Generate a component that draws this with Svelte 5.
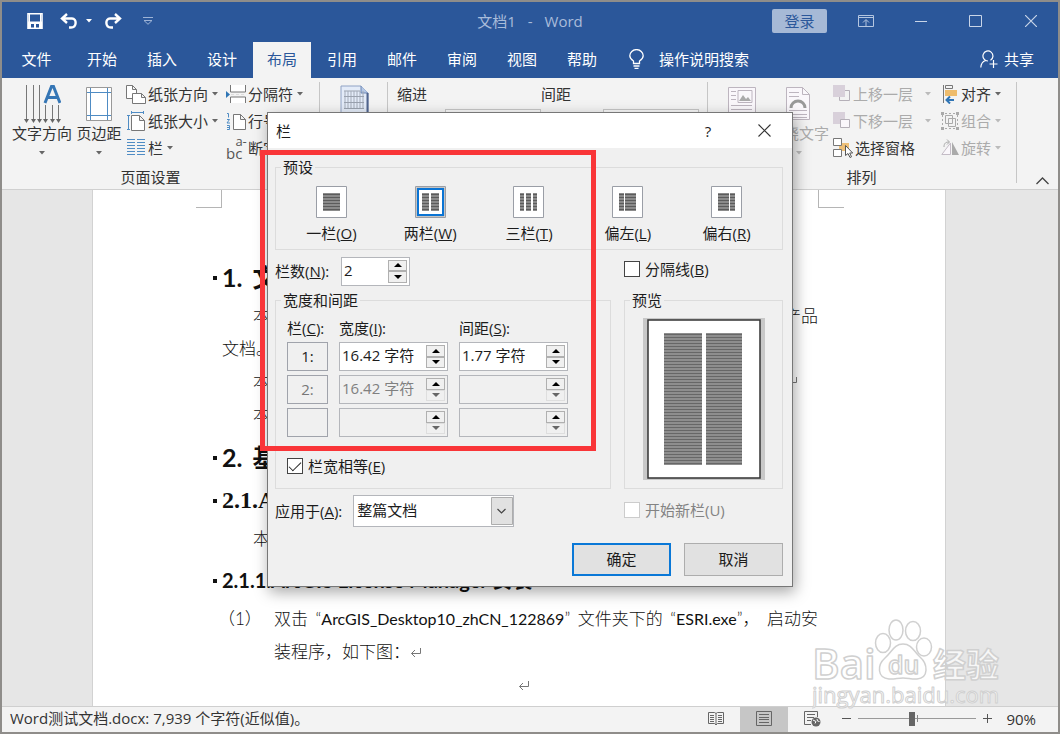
<script>
  const tabs = ['文件', '开始', '插入', '设计', '布局', '引用', '邮件', '审阅', '视图', '帮助'];
  let activeTab = $state('布局');

  const presets = [
    { name: '一栏', key: 'O', cols: [[7, 17]] },
    { name: '两栏', key: 'W', cols: [[7, 7], [16, 8]] },
    { name: '三栏', key: 'T', cols: [[7, 4], [13, 5], [20, 4]] },
    { name: '偏左', key: 'L', cols: [[7, 5], [13, 11]] },
    { name: '偏右', key: 'R', cols: [[7, 11], [19, 5]] }
  ];
  let preset = $state('两栏');
  let count = $state('2');
  let separator = $state(false);
  let equal = $state(true);
  let zoom = $state(45);

  const rows = [
    { n: '1:', width: '16.42 字符', gap: '1.77 字符', on: true },
    { n: '2:', width: '16.42 字符', gap: '', on: false },
    { n: '', width: '', gap: '', on: false }
  ];
  const range = (n) => Array.from({ length: n }, (_, i) => i);
</script>

{#snippet caret(cls)}
  <svg class="caret {cls}" width="6" height="4" viewBox="0 0 6 4"><path d="M0 0h6L3 3.6z" fill="currentColor" /></svg>
{/snippet}

{#snippet spinner(id, value, label, on)}
  <span class="spin" class:off={!on}>
    <input {id} type="text" {value} aria-label={label} disabled={!on} />
    <span class="arrows">
      <button type="button" aria-label="增加"><svg width="8" height="4" viewBox="0 0 8 4"><path d="M0 4h8L4 0z" fill="#000" /></svg></button>
      <button type="button" aria-label="减少" disabled={!on}><svg width="8" height="4" viewBox="0 0 8 4"><path d="M0 0h8L4 4z" fill="currentColor" /></svg></button>
    </span>
  </span>
{/snippet}

{#snippet pilcrow()}
  <svg class="return" width="12" height="10" viewBox="0 0 12 10" fill="none" stroke="#777"><path d="M10.5 0v5.5H1.5M5 2L1.5 5.5 5 9" /></svg>
{/snippet}

<div class="window">
  <header class="titlebar">
    <div class="quick">
      <button aria-label="保存"><svg width="16" height="16" viewBox="0 0 16 16"><path d="M1 .8h14v14.400H1z" fill="none" stroke="#fff" stroke-width="1.600" /><path d="M1 8.500h14V15h-3v-4H4v4H1z" fill="#fff" /><path d="M7 11h2v4H7zM2 1h1v8H2zM13 1h1v8h-1z" fill="#fff" /></svg></button>
      <button class="undo" aria-label="撤消"><svg width="18" height="16" viewBox="0 0 18 16" fill="none" stroke="#fff" stroke-width="2.400"><path d="M7 1L2 5.500 7 10M2.500 5.500H12c5 0 5 9-1 9H9" /></svg></button>
      {@render caret('white')}
      <button class="redo" aria-label="恢复"><svg width="18" height="16" viewBox="0 0 18 16" fill="none" stroke="#fff" stroke-width="2.400"><path d="M11 1l5 4.500-5 4.500M15.500 5.500H6c-5 0-5 9 1 9h2" /></svg></button>
      <button class="more" aria-label="自定义"><svg width="10" height="8" viewBox="0 0 10 8" fill="none" stroke="#9db3d6"><path d="M0 .5h10M1 3.500h8L5 7.300z" /></svg></button>
    </div>
    <div class="title"><span>文档1</span><span>-</span><span>Word</span></div>
    <div class="controls">
      <button class="login">登录</button>
      <button aria-label="功能区显示选项"><svg width="16" height="12" viewBox="0 0 16 12" fill="none" stroke="#b5c6e0"><path d="M.5.5h15v11H.5zM.5 2.500h15M8 11V5M5 7.500L8 4.500l3 3" /></svg></button>
      <button aria-label="最小化"><svg width="14" height="12" viewBox="0 0 14 12"><path d="M1 6.500h12" stroke="#c9d5e8" /></svg></button>
      <button aria-label="最大化"><svg width="13" height="12" viewBox="0 0 13 12"><path d="M.5.5h12v11H.5z" fill="none" stroke="#c9d5e8" /></svg></button>
      <button aria-label="关闭"><svg width="12" height="12" viewBox="0 0 12 12"><path d="M0 0l12 12M12 0L0 12" stroke="#c9d5e8" stroke-width="1.200" /></svg></button>
    </div>
  </header>

  <nav class="tabs">
    {#each tabs as tab}
      <button class:active={activeTab === tab} class:file={tab === '文件'} onclick={() => (activeTab = tab)}>{tab}</button>
    {/each}
    <button class="tell">
      <svg width="15" height="20" viewBox="0 0 15 20" fill="none" stroke="#fff" stroke-width="1.300"><path d="M4.500 14.500V12C2 10.500.8 9 .8 6.800a6.700 6.200 0 0 1 13.400 0c0 2.200-1.200 3.700-3.700 5.200v2.500zM4.500 17h6M5.500 19.300h4" /></svg>
      操作说明搜索
    </button>
    <button class="share">
      <svg width="18" height="18" viewBox="0 0 18 18" fill="none" stroke="#fff" stroke-width="1.200"><path d="M8 11a5 5 0 1 1 2.500-.7M5.500 10.500C2.500 11.500 1 14 .8 17.500M13.500 10v8M9.500 14h8" /></svg>
      共享
    </button>
  </nav>

  <section class="ribbon">
    <div class="group page">
      <div class="tools">
        <button class="big">
          <svg width="38" height="38" viewBox="0 0 38 38"><path d="M3.500 0v34M10.500 0v34M16.500 0v34M22.500 20v14M29.500 20v14M35.500 20v14" stroke="#777" /><path d="M1 34h5l-2.500 4zM8 34h5l-2.500 4zM14 34h5l-2.500 4zM20 34h5l-2.500 4zM27 34h5l-2.500 4zM33 34h5l-2.500 4z" fill="#666" /><path d="M22 18L28.500 1.500h2L37 18M24.500 12.500h10" fill="none" stroke="#3576b5" stroke-width="3" /></svg>
          <span>文字方向</span>{@render caret('')}
        </button>
        <button class="big narrow">
          <svg width="28" height="38" viewBox="0 0 28 38"><path d="M1.500 2.500h25v33h-25z" fill="#fff" stroke="#999" /><path d="M5.500 3v32M22.500 3v32M2 7.500h24M2 30.500h24" stroke="#4f8cc4" /></svg>
          <span>页边距</span>{@render caret('')}
        </button>
        <div class="stack">
          <button><svg class="ico" width="20" height="20" viewBox="0 0 20 20" fill="#fff" stroke="#777"><path d="M.5 1.500h6l4 4v9H.5zM6.500 1.500v4h4" /><path d="M6.500 9.500h9l4 4v6h-13zM15.500 9.500v4h4" /></svg>纸张方向{@render caret('')}</button>
          <button><svg class="ico" width="20" height="20" viewBox="0 0 20 20" fill="none"><path d="M5.500 4.500h8l5 5v10h-13zM13.500 4.500v5h5" fill="#fff" stroke="#777" /><path d="M5 1.500h13M5.500 0v3M17.500 0v3M2.500 4v15M1 4.500h3M1 18.500h3" stroke="#4f8cc4" /></svg>纸张大小{@render caret('')}</button>
          <button><svg class="ico" width="20" height="20" viewBox="0 0 20 20"><path d="M1 1.500h8M1 4.500h8M1 7.500h8M1 10.500h8M1 13.500h8M1 16.500h8M11 1.500h8M11 4.500h8M11 7.500h8M11 10.500h8M11 13.500h8M11 16.500h8" stroke="#4f8cc4" /></svg>栏{@render caret('')}</button>
        </div>
        <div class="stack">
          <button><svg class="ico" width="20" height="20" viewBox="0 0 20 20"><path d="M4.500 1v7h15V1M4.500 19v-6h15v6" fill="#fff" stroke="#777" /><path d="M0 7l4 3.500L0 14z" fill="#2f75b5" /><path d="M5 10.500h3M10 10.500h3M15 10.500h3" stroke="#ddd" /></svg>分隔符{@render caret('')}</button>
          <button><svg class="ico" width="20" height="20" viewBox="0 0 20 20"><path d="M7.500 3.500h7l5 5v10h-12zM14.500 3.500v5h5" fill="#fff" stroke="#777" /><path d="M1 2.500h1.500v4M1 8.500h2.500L1 12h3M1 14.500h2.500v4H1M1 16.500h2" fill="none" stroke="#4f8cc4" /></svg>行号{@render caret('')}</button>
          <button><span class="ico hyphen"><span>bc</span><sup>a-</sup></span>断字{@render caret('')}</button>
        </div>
      </div>
      <div class="caption">页面设置</div>
    </div>

    <div class="group grid">
      <svg width="30" height="36" viewBox="0 0 30 36"><path d="M1 1h20l7 7v27H1z" fill="#e3ebf8" stroke="#8fa2c4" /><path d="M21 1v7h7" fill="#b5c8e6" stroke="#6c87b4" /><path d="M27.500 8v27" stroke="#50658e" stroke-width="2" /><path d="M4 6h16M4 11.500h20M4 17.500h20M4 23.500h20" stroke="#9aa2af" stroke-width="1" /><path d="M4.500 8.500h20M4.500 14.500h20M4.500 20.500h20" stroke="#a4abb8" stroke-dasharray="1 2" stroke-width="5" /></svg>
    </div>

    <div class="group para">
      <div class="half"><span>缩进</span><i></i></div>
      <div class="half"><span>间距</span><i></i></div>
    </div>

    <div class="group arrange">
      <div class="tools">
        <button class="big dim first" aria-label="位置"><svg width="28" height="38" viewBox="0 0 28 38" fill="none" stroke="#bdb5bf"><path d="M.5 2.500h27v34H.5z" fill="#faf7fb" /><path d="M10 5.500h14v12H10z" /><path d="M11 16l4-6 3 4 2-2 3 4z" fill="#aaa" stroke="none" /><path d="M3 6.500h5M3 10.500h5M3 14.500h5M3 20.500h21M3 24.500h21M3 28.500h21" /></svg></button>
        <button class="big dim">
          <svg width="28" height="38" viewBox="0 0 28 38" fill="none" stroke="#bdb5bf"><path d="M1.500 2.500h16l7 7v25h-23z" fill="#faf7fb" /><path d="M17.500 2.500v7h7M4 7.500h10M4 11.500h10M4 25.500h18M4 29.500h18M4 32.500h18" /><path d="M6 23a7 7 0 0 1 14 0" stroke="#999" stroke-width="3" /></svg>
          <span>环绕文字</span>{@render caret('')}
        </button>
        <div class="stack mid">
          <button class="dim"><svg class="ico" width="18" height="20" viewBox="0 0 18 20"><path d="M0 1h12v12H0z" fill="#d8d0da" /><path d="M12 6.500h4.500v10h-10V13" fill="none" stroke="#b5b0b8" /></svg>上移一层{@render caret('end')}</button>
          <button class="dim"><svg class="ico" width="18" height="20" viewBox="0 0 18 20"><path d="M0 1h12v12H0z" fill="#d8d0da" /><path d="M7.500 8.500h9v8h-9z" fill="#faf7fb" stroke="#b5b0b8" /></svg>下移一层{@render caret('end')}</button>
          <button><svg class="ico" width="20" height="20" viewBox="0 0 20 20"><path d="M6 5h10v8H6z" fill="#eec078" /><path d="M.5.5h8v7h-8zM.5 11.500h8v7h-8z" fill="#fff" stroke="#777" /><path d="M12.500 7.500v10l2.500-2 2 4 1.500-.7-1.800-3.800h3z" fill="#fff" stroke="#555" /></svg>选择窗格</button>
        </div>
        <div class="stack last">
          <button><svg class="ico" width="18" height="20" viewBox="0 0 18 20"><path d="M2.500 1v18M4.500 1.500h7v3h-7z" fill="none" stroke="#777" /><path d="M4 6h12v6H4z" fill="#eebc6c" /><path d="M13 16H6M9 12.500L5.500 16 9 19.500" fill="none" stroke="#2f75b5" stroke-width="2" /></svg>对齐{@render caret('')}</button>
          <button class="dim"><svg class="ico" width="18" height="20" viewBox="0 0 18 20" fill="none" stroke="#aaa"><path d="M4.500 4.500h7v8h-7zM7.500 7.500h7v8h-7z" /><path d="M1.500 4v12M16.500 4v12M4 2.500h10M4 17.500h10" stroke-dasharray="2 2" /><path d="M0 1h3v3H0zM15 1h3v3h-3zM0 16h3v3H0zM15 16h3v3h-3z" fill="#aaa" stroke="none" /></svg>组合{@render caret('')}</button>
          <button class="dim"><svg class="ico" width="18" height="20" viewBox="0 0 18 20"><path d="M9.500 5v11.500H.8z" fill="#faf7fb" stroke="#c4bcc6" /><path d="M11 4l7 13h-7z" fill="#aaa" /><path d="M3 9c0-4 2-5 5-5M6 1.500L8.500 4 6 6.500" fill="none" stroke="#aaa" /></svg>旋转{@render caret('')}</button>
        </div>
      </div>
      <div class="caption mid">排列</div>
    </div>
    <button class="collapse" aria-label="折叠功能区"><svg width="13" height="8" viewBox="0 0 13 8"><path d="M.5 7l6-6 6 6" fill="none" stroke="#444" stroke-width="1.300" /></svg></button>
  </section>

  <main class="desk">
    <article class="sheet">
      <div class="crops"><i></i><i></i></div>
      <h1><b class="dot"></b>1.<span>文</span></h1>
      <p class="ends"><span class="ind">本</span><span>产品</span></p>
      <p>文档。</p>
      <p class="ends ret"><span class="ind">本</span>{@render pilcrow()}</p>
      <p class="ind">本</p>
      <h1 class="gap"><b class="dot"></b>2.<span>基</span></h1>
      <h2><b class="dot"></b>2.1.A</h2>
      <p class="ind">本</p>
      <h3><b class="dot"></b>2.1.1.ArcGIS License Manager 安装</h3>
      <div class="item">
        <p class="num">（1）</p>
        <div>
          <p class="ends"><span>双击</span><span>“<em>ArcGIS_Desktop10_zhCN_122869</em>”</span><span>文件夹下的</span><span>“<em>ESRI.exe</em>”，</span><span>启动安</span></p>
          <p>装程序，如下图：{@render pilcrow()}</p>
        </div>
      </div>
      <p class="center">{@render pilcrow()}</p>
    </article>
  </main>

  <footer class="status">
    <span class="words">Word测试文档.docx: 7,939 个字符(近似值)。</span>
    <button aria-label="阅读视图"><svg width="16" height="15" viewBox="0 0 16 15" fill="none" stroke="#666"><path d="M.5 1.500h6l1.500 1 1.500-1h6v11h-6L8 14l-1.500-1.500h-6zM8 2.500V14M2 4.500h4M2 6.500h4M2 8.500h4M2 10.500h4M10 4.500h4M10 6.500h4M10 8.500h4M10 10.500h4" /></svg></button>
    <button class="on" aria-label="页面视图"><svg width="16" height="15" viewBox="0 0 16 15" fill="none" stroke="#666"><path d="M.5.5h15v14H.5zM3 3.500h10M3 6.500h10M3 8.500h10M3 11.500h10" /></svg></button>
    <button aria-label="Web 版式视图"><svg width="17" height="16" viewBox="0 0 17 16" fill="none" stroke="#666"><path d="M7 13.500H.5V.5h13V6M3 3.500h8M3 6.500h7M3 9.500h4" /><circle cx="12" cy="11" r="4.500" fill="#666" stroke="none" /><path d="M9 9l3 1.500-1 2M13 8l.5 2 2 .5" stroke="#fff" /></svg></button>
    <div class="zoom">
      <button aria-label="缩小"><svg width="9" height="9" viewBox="0 0 9 9"><path d="M0 4.500h9" stroke="#555" /></svg></button>
      <input type="range" aria-label="显示比例" min="0" max="100" bind:value={zoom} />
      <button aria-label="放大"><svg width="9" height="9" viewBox="0 0 9 9"><path d="M0 4.500h9M4.500 0v9" stroke="#555" /></svg></button>
      <span>90%</span>
    </div>
  </footer>

  <div class="dialog" role="dialog" aria-label="栏">
    <div class="dtitle">
      <span>栏</span>
      <button aria-label="帮助">?</button>
      <button aria-label="关闭"><svg width="13" height="13" viewBox="0 0 13 13"><path d="M.5.5l12 12M12.500.5l-12 12" stroke="#333" stroke-width="1.100" /></svg></button>
    </div>
    <div class="dbody">
      <fieldset class="presets">
        <legend>预设</legend>
        {#each presets as p}
          <button type="button" class:sel={preset === p.name} onclick={() => (preset = p.name)}>
            <svg width="31" height="32" viewBox="0 0 31 32">
              <path d="M.5.5h30v31H.5z" fill="#fff" stroke="#9a9ea6" />
              {#if preset === p.name}
                <path d="M1.500 1.500h28v29h-28z" fill="none" stroke="#c4c4c4" />
                <path d="M3 3h25v26H3z" fill="#fff" stroke="#0a74d4" stroke-width="2" />
              {/if}
              {#each p.cols as [x, w]}
                <path d="M{x} 7h{w}v18h-{w}z" fill="#8b8b8b" />
                {#each range(6) as i}<path d="M{x} {8.5 + i * 3}h{w}" stroke="#5c5c5c" />{/each}
              {/each}
            </svg>
            <span>{p.name}(<u>{p.key}</u>)</span>
          </button>
        {/each}
      </fieldset>

      <div class="cols">
        <div class="line count">
          <label for="count">栏数(<u>N</u>):</label>
          {@render spinner('count', count, undefined, true)}
        </div>
        <label class="check"><input type="checkbox" bind:checked={separator} /><span>分隔线(<u>B</u>)</span></label>

        <fieldset class="sizes">
          <legend>宽度和间距</legend>
          <div class="table">
            <span>栏(<u>C</u>):</span><label for="w0">宽度(<u>I</u>):</label><label for="g0">间距(<u>S</u>):</label>
            {#each rows as r, i}
              <output class:off={!r.on}>{r.n}</output>
              {@render spinner(`w${i}`, r.width, i ? '宽度' : undefined, r.on)}
              {@render spinner(`g${i}`, r.gap, i ? '间距' : undefined, r.on)}
            {/each}
          </div>
          <label class="check"><input type="checkbox" bind:checked={equal} /><span>栏宽相等(<u>E</u>)</span></label>
        </fieldset>

        <fieldset class="preview">
          <legend>预览</legend>
          <svg width="122" height="162" viewBox="0 0 122 162">
            <path d="M0 0h122v162H0z" fill="#c8c8c8" />
            <path d="M5 2h112v158H5z" fill="#fff" stroke="#333" stroke-width="1.500" />
            <path d="M21 15h38v132H21zM63 15h36v132H63z" fill="#8e8e8e" />
            {#each range(44) as i}<path d="M21 {16.5 + i * 3}h38M63 {16.5 + i * 3}h36" stroke="#676767" />{/each}
          </svg>
        </fieldset>

        <div class="line apply">
          <label for="apply">应用于(<u>A</u>):</label>
          <span class="select">
            <select id="apply"><option>整篇文档</option></select>
            <svg width="22" height="28" viewBox="0 0 22 28"><path d="M.5.5h21v27H.5z" fill="#e1e1e1" stroke="#adadad" /><path d="M6.500 12l4 4 4-4" fill="none" stroke="#444" stroke-width="1.200" /></svg>
          </span>
        </div>
        <label class="check off"><input type="checkbox" disabled /><span>开始新栏(U)</span></label>
      </div>
      <div class="actions">
        <button class="ok">确定</button>
        <button>取消</button>
      </div>
    </div>
  </div>

  <div class="mark"></div>

  <svg class="logo" width="200" height="92" viewBox="0 0 200 92" role="img" aria-label="Baidu 经验">
    <g fill="#fff" fill-opacity=".7" stroke="#d0d0d0" stroke-width="1.500" stroke-linejoin="round">
      <text x="0" y="60" font-size="42" font-weight="600">Bai</text>
      <ellipse cx="71" cy="24" rx="7.500" ry="9.500" />
      <ellipse cx="84" cy="11" rx="7" ry="10" />
      <ellipse cx="101" cy="12" rx="7.500" ry="9.500" />
      <ellipse cx="112" cy="28" rx="7.500" ry="9" />
      <path d="M91 25c9 0 11 8 17 13 8 7 9 21-3 22-5 .5-9-1-14-1s-9 1.500-14 1c-12-1-12-14-4-21 7-6 9-14 18-14z" />
      <text x="76" y="55" font-size="25" font-weight="600">du</text>
      <text x="121" y="58" font-size="33" font-weight="700">经验</text>
      <text x="0" y="84" font-size="22" stroke-width="1">jingyan.baidu.com</text>
    </g>
  </svg>
</div>

<style>
  :global(body) { margin: 0; }
  * { box-sizing: border-box; }
  .window {
    position: relative; display: flex; flex-direction: column; min-height: 100vh; overflow: hidden;
    border: 2px solid #8f8d8a; background: #f3f3f3; color: #333;
    font: 15px/20px "Open Sans", "Noto Sans CJK SC", sans-serif;
  }
  button, input, select { font: inherit; color: inherit; margin: 0; }
  button { border: 0; background: none; padding: 0; display: inline-flex; align-items: center; justify-content: center; white-space: nowrap; }
  svg { display: block; flex: none; }
  p, h1, h2, h3 { margin: 0; }

  .titlebar { display: grid; grid-template-columns: 1fr auto 1fr; align-items: center; height: 40px; padding-bottom: 2px; background: #2b579a; }
  .quick { display: flex; align-items: center; padding-left: 25px; }
  .undo { margin: 0 8px 0 17px; }
  .redo { margin: 0 21px 0 12px; }
  .caret { color: #666; }
  .caret.white { color: #fff; }
  .title { display: flex; gap: 12px; color: #a9bcda; }
  .controls { display: flex; justify-content: flex-end; align-items: center; }
  .controls button { width: 55px; height: 24px; }
  .controls .login { margin-right: 11px; background: #a6b9d6; color: #2b579a; border-radius: 2px; }

  .tabs { display: flex; gap: 2px; height: 36px; background: #2b579a; color: #fff; }
  .tabs button { width: 58px; padding-bottom: 2px; }
  .tabs .file { width: 69px; }
  .tabs .active { background: #f3f3f3; color: #2b579a; }
  .tabs .tell { width: auto; gap: 15px; margin-left: 16px; }
  .tabs .share { width: auto; gap: 6px; margin: 0 24px 0 auto; }

  .ribbon { display: flex; height: 112px; border-bottom: 1px solid #d0d0d0; background: #f3f3f3; }
  .group { display: flex; flex-direction: column; margin: 4px 0 6px; border-right: 1px solid #c6c6c6; }
  .tools { display: flex; height: 82px; }
  .page { width: 318px; padding-left: 10px; }
  .big { width: 60px; flex-direction: column; justify-content: flex-start; padding-top: 3px; }
  .big .caret { margin-top: 8px; }
  .big.narrow { width: 54px; }
  .dim { color: #ababab; }
  .dim .caret { color: #bbb; }
  .stack { width: 100px; }
  .stack:last-child { width: 92px; }
  .stack button { display: flex; justify-content: flex-start; gap: 4px; height: 27px; width: 100%; padding-bottom: 3px; }
  .stack .ico { margin-right: -2px; }
  .hyphen { display: flex; width: 20px; height: 24px; font-size: 15px; color: #555; }
  .hyphen span { align-self: flex-end; line-height: 14px; }
  .hyphen sup { font-size: 13px; line-height: 10px; margin-left: -7px; }
  .caption { padding: 4px 30px 0 0; text-align: center; }
  .caption.mid { padding-right: 6px; }
  .grid { width: 68px; align-items: center; padding: 3px 0 0 2px; }
  .para { width: 320px; flex-direction: row; padding: 2px 8px 0 9px; }
  .half { flex: 1 0 144px; display: flex; flex-direction: column; gap: 5px; }
  .half + .half { flex-basis: 158px; }
  .half i { height: 24px; width: 96px; margin-left: 48px; border: 1px solid #c6c6c6; background: #f8f8f8; }
  .half + .half i { margin-left: 62px; }
  .arrange { width: 309px; padding-left: 5px; }
  .big.first { width: 58px; }
  .big.first + .big { width: 56px; }
  .stack.mid { width: 108px; margin-left: 6px; }
  .mid .caret.end { margin: 0 10px 0 auto; }
  .stack.last { width: 70px; }
  .collapse { align-self: flex-end; margin: 0 0 4px 19px; }

  .desk { flex: 1; display: grid; padding: 0 112px 0 90px; background: #e6e6e6; }
  .sheet { padding: 0 127px 0 129px; background: #fff; border: solid #d2d2d2; border-width: 0 1px; color: #111; font: 17px/33px Lato, "Noto Sans CJK SC", sans-serif; font-weight: 300; }
  .crops { display: flex; justify-content: space-between; height: 66px; margin: 0 -26px; }
  .crops i { width: 26px; height: 18px; border: solid #b5b5b5; border-width: 0 1px 1px 0; }
  .crops i:last-child { border-width: 0 0 1px 1px; }
  .sheet h1, .sheet h2, .sheet h3 { display: flex; align-items: center; height: 43px; line-height: 43px; white-space: pre; }
  h1 { font-size: 25px; }
  h1 span { margin-left: 10px; }
  h1.gap { margin-top: 5px; }
  h2 { font-size: 24px; font-family: "Liberation Serif", serif; }
  h3 { font-size: 20px; margin-top: 4px; }
  .dot { width: 4px; height: 4px; margin: 0 5px 0 -9px; background: #111; }
  .ends { display: flex; justify-content: space-between; white-space: nowrap; }
  .ret { padding-right: 20px; align-items: center; }
  .ind { padding-left: 31px; }
  .item { display: grid; grid-template-columns: 52px 1fr; }
  .num { margin-left: -4px; white-space: nowrap; }
  em { font-style: normal; font-weight: 400; font-size: 16px; }
  .return { display: inline-block; }
  .center { text-align: center; padding-left: 8px; }

  .status { display: flex; align-items: stretch; height: 26px; border-top: 1px solid #cfcfcf; background: #f3f3f3; }
  .words { flex: 1; line-height: 23px; padding-left: 8px; color: #333; }
  .status > button { width: 48px; padding-bottom: 2px; }
  .status .on { background: #c6c6c6; }
  .zoom { display: flex; align-items: center; padding: 0 22px 2px 6px; }
  .zoom input { appearance: none; width: 118px; height: 14px; margin: 0 7px; background: linear-gradient(#888, #888) 50% 50% / 1px 7px no-repeat, linear-gradient(#999, #999) 50% 50% / 100% 1px no-repeat; }
  .zoom input::-webkit-slider-thumb { appearance: none; width: 6px; height: 14px; background: #666; }
  .zoom span { margin-left: 14px; }

  .dialog { position: absolute; left: 265px; top: 110px; width: 526px; border: 1px solid #777; background: #f0f0f0; box-shadow: 2px 5px 14px rgba(0, 0, 0, .35); color: #1c1c1c; }
  .dtitle { display: flex; align-items: center; height: 35px; padding-left: 8px; background: #fff; }
  .dtitle span { flex: 1; }
  .dtitle button { width: 56px; height: 34px; }
  .dbody { padding: 9px 9px 10px 7px; }
  fieldset { min-width: 0; margin: 0; padding: 0; border: 1px solid #dcdcdc; }
  legend { margin-left: 5px; padding: 0 2px; line-height: 20px; }
  .presets { display: grid; grid-template-columns: repeat(5, 1fr); height: 93px; padding: 0 6px; }
  .presets legend { margin-left: -1px; }
  .presets button { flex-direction: column; justify-content: flex-start; gap: 5px; padding-top: 9px; }
  .cols { display: grid; grid-template-columns: minmax(0, 1fr) 159px; column-gap: 13px; margin-top: 6px; }
  .line { display: flex; align-items: center; }
  .count { gap: 12px; height: 30px; }
  .spin { display: flex; width: 109px; height: 29px; padding: 2px; border: 1px solid #b4b6bb; background: #fff; }
  .count .spin { width: 69px; }
  .spin.off { background: #f0f0f0; }
  .spin input { flex: 1; min-width: 0; width: 0; padding: 0 0 3px; border: 0; outline: 0; background: none; }
  .spin input:disabled { color: #808080; }
  .arrows { display: grid; grid-template-rows: 1fr 1fr; width: 19px; }
  .arrows button { border: 1px solid #b0b0b0; background: #f0f0f0; color: #000; }
  .arrows button:disabled { border-color: #dedede; color: #666; }
  .check { display: flex; align-items: center; gap: 5px; }
  .cols > .check { padding-bottom: 5px; }
  .cols > .check.off { padding-bottom: 3px; }
  .check.off { color: #838383; }
  .check input { appearance: none; display: grid; place-items: center; width: 16px; height: 16px; border: 1px solid #444; background: #fff; }
  .check input:checked::after { content: ""; width: 11px; height: 5px; border: solid #222; border-width: 0 0 1px 1px; transform: translateY(-1px) rotate(-45deg); }
  .check.off input { border-color: #ccc; }
  .sizes, .preview { height: 199px; margin-top: 4px; }
  .table { display: grid; grid-template-columns: 41px 109px 109px; column-gap: 11px; row-gap: 4px; padding: 8px 0 0 11px; }
  .table label, .table > span:not(.spin) { white-space: nowrap; }
  output { display: flex; align-items: center; justify-content: center; height: 29px; padding-bottom: 2px; border: 1px solid #a0a3ab; }
  output.off { color: #777; }
  .sizes .check { margin: 19px 0 0 11px; }
  .preview svg { margin: 8px 0 0 18px; }
  .apply { gap: 11px; height: 44px; }
  .select { display: grid; align-items: center; width: 161px; }
  .select > * { grid-area: 1 / 1; }
  .select select { appearance: none; width: 100%; height: 32px; padding: 0 26px 2px 3px; border: 1px solid #b4b6bb; border-radius: 0; background: #fff; }
  .select svg { justify-self: end; margin-right: 1px; pointer-events: none; }
  .actions { display: flex; justify-content: flex-end; gap: 13px; margin-top: 10px; }
  .actions button { width: 99px; height: 33px; padding-bottom: 2px; border: 1px solid #adadad; background: #e1e1e1; }
  .actions .ok { border: 2px solid #0a78d7; }

  .mark { position: absolute; left: 258px; top: 148px; width: 336px; height: 301px; border: 5px solid #f93538; pointer-events: none; }
  .logo { position: absolute; right: 46px; bottom: 21px; font-family: "Open Sans", "Noto Sans CJK SC", sans-serif; pointer-events: none; }
</style>
